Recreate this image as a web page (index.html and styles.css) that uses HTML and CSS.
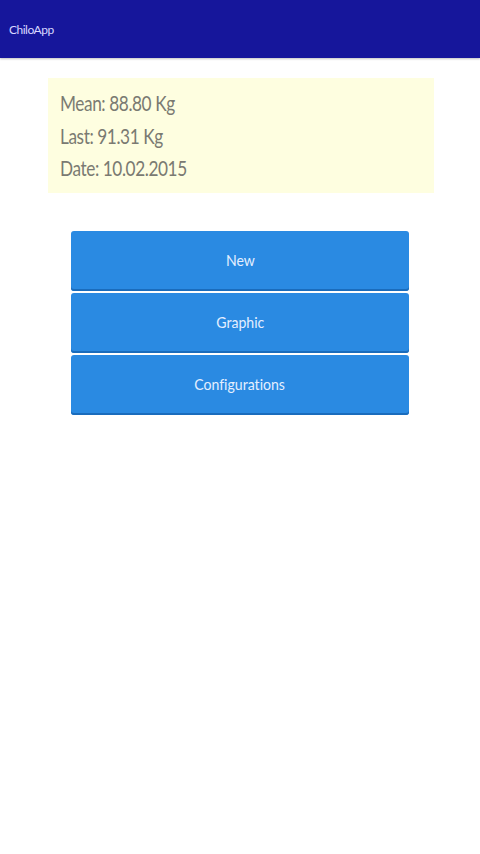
FILE: index.html
```html
<!DOCTYPE html>
<html>
<head>
<meta charset="utf-8">
<link rel="stylesheet" href="styles.css">
</head>
<body>
<header class="appbar"><span class="title">ChiloApp</span></header>
<main class="content">
  <section class="stats">
    <p class="stat">Mean: 88.80 Kg</p>
    <p class="stat">Last: 91.31 Kg</p>
    <p class="stat">Date: 10.02.2015</p>
  </section>
  <nav class="menu">
    <button class="btn"><span class="label">New</span></button>
    <button class="btn"><span class="label">Graphic</span></button>
    <button class="btn"><span class="label">Configurations</span></button>
  </nav>
</main>
</body>
</html>
```
FILE: styles.css
```css
html, body {
  margin: 0;
  padding: 0;
  background: #ffffff;
  width: 480px;
  height: 854px;
  font-family: Lato, "Liberation Sans", sans-serif;
  font-variant-ligatures: none;
}
.appbar {
  height: 58px;
  background: #16169b;
  display: flex;
  align-items: center;
  padding-left: 9px;
  box-shadow: 0 1px 2px rgba(0,0,0,0.25);
}
.title {
  color: #d8d8ff;
  font-size: 12px;
  letter-spacing: -0.5px;
}
.content {
  display: flex;
  flex-direction: column;
  align-items: center;
  padding-top: 20px;
}
.stats {
  width: 386px;
  margin-left: 2px;
  height: 115px;
  box-sizing: border-box;
  background: #fefee0;
  padding: 9px 12px;
  display: flex;
  flex-direction: column;
}
.stat {
  margin: 0;
  color: #7a7a72;
  font-size: 21px;
  line-height: 32.5px;
  letter-spacing: -0.5px;
  transform: scaleX(0.82);
  transform-origin: left center;
}
.menu {
  margin-top: 38px;
  width: 338px;
  display: flex;
  flex-direction: column;
  gap: 2px;
}
.btn {
  height: 60px;
  border: none;
  border-radius: 3px;
  background: #2a8ae2;
  box-shadow: inset 0 -2px 0 #1a6cbc;
  color: #e4efff;
  font-family: Lato, "Liberation Sans", sans-serif;
  font-variant-ligatures: none;
  font-size: 16px;
  padding: 0 0 3px 0;
}
.label {
  display: inline-block;
  transform: scaleX(0.88);
}
```
